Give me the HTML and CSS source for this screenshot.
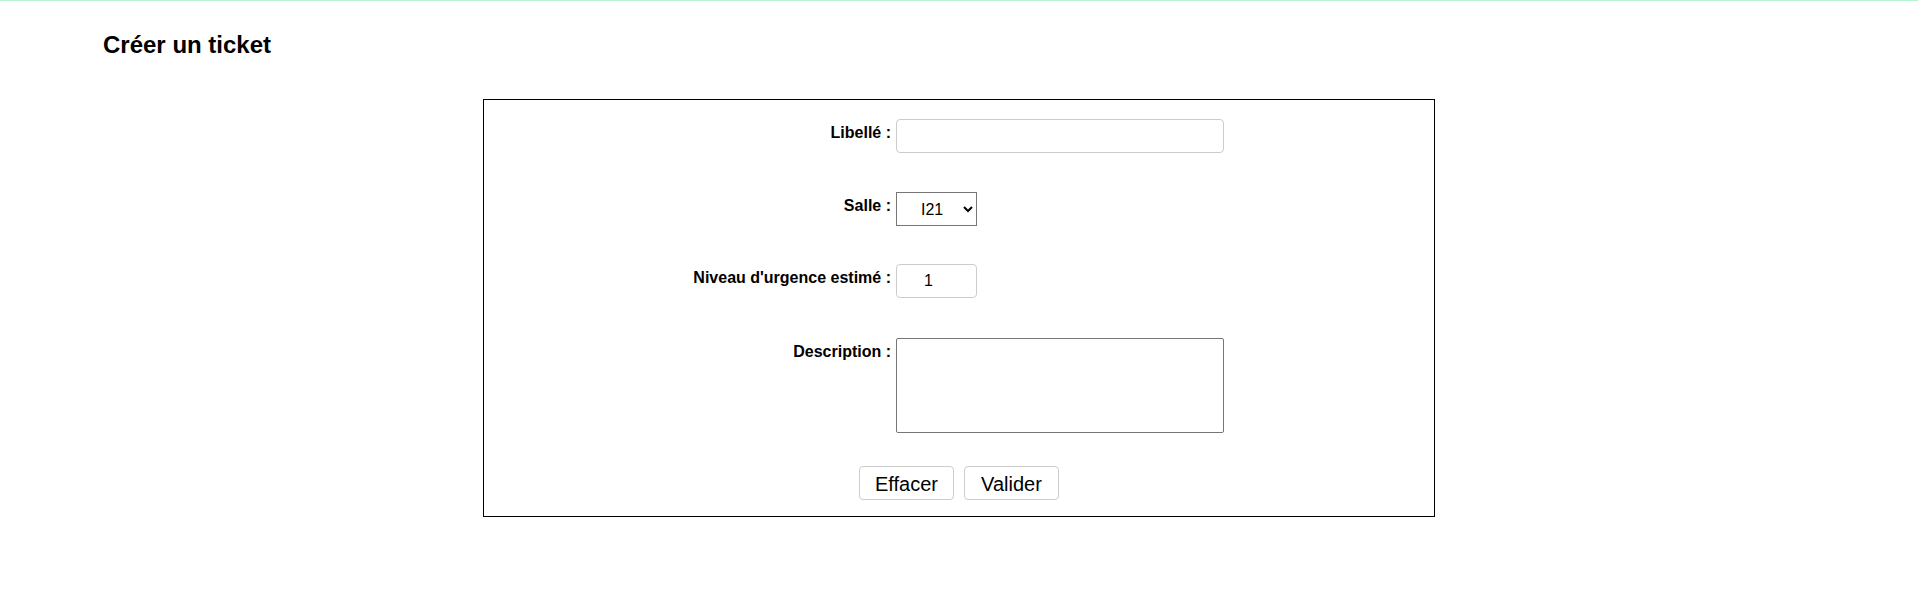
FILE: index.html
```html
<!DOCTYPE html>
<html lang="fr">
<head>
<meta charset="utf-8">
<title>Créer un ticket</title>
<link rel="stylesheet" href="styles.css">
</head>
<body>
<div class="page">
  <h2 class="title">Créer un ticket</h2>
  <form class="ticket-box">
    <div class="row row-1">
      <label class="lbl" for="libelle">Libellé :</label>
      <input class="field field-wide" id="libelle" type="text">
    </div>
    <div class="row row-2">
      <label class="lbl" for="salle">Salle :</label>
      <select class="field-select" id="salle">
        <option>I21</option>
      </select>
    </div>
    <div class="row row-3">
      <label class="lbl" for="niveau">Niveau d'urgence estimé :</label>
      <input class="field field-small" id="niveau" type="text" value="1">
    </div>
    <div class="row row-4">
      <label class="lbl" for="desc">Description :</label>
      <textarea class="field-area" id="desc"></textarea>
    </div>
    <div class="actions">
      <button type="reset" class="btn">Effacer</button>
      <button type="button" class="btn">Valider</button>
    </div>
  </form>
</div>
</body>
</html>
```

FILE: styles.css
```css
html, body {
  margin: 0;
  padding: 0;
  background: #ffffff;
}

body {
  border-top: 1px solid #b6f5cf;
  font-family: "Liberation Sans", Arial, sans-serif;
  color: #000;
}

.page {
  padding-top: 30px;
}

.title {
  margin: 0 0 40px 103px;
  font-size: 24px;
  font-weight: bold;
  line-height: 28px;
}

.ticket-box {
  box-sizing: border-box;
  width: 952px;
  margin: 0 auto;
  border: 1px solid #000;
  padding: 19px 0 16px;
  display: flex;
  flex-direction: column;
  align-items: center;
}

.row {
  width: 532px;
  display: flex;
  align-items: flex-start;
  gap: 5px;
}

.row-1 { margin-bottom: 39px; }
.row-2 { margin-bottom: 38px; }
.row-3 { margin-bottom: 40px; }
.row-4 { margin-bottom: 33px; }

.lbl {
  width: 198px;
  flex: none;
  text-align: right;
  font-weight: bold;
  font-size: 16px;
  line-height: 18px;
  padding-top: 5px;
}

.field {
  box-sizing: border-box;
  height: 34px;
  border: 1px solid #cccccc;
  border-radius: 4px;
  background: #fff;
  font-family: "Liberation Sans", Arial, sans-serif;
  color: #000;
  margin: 0;
  outline: none;
}

.field-wide {
  width: 328px;
  font-size: 16px;
  padding: 0 8px;
}

.field-small {
  width: 81px;
  font-size: 16px;
  text-align: center;
  padding: 0 16px 0 0;
}

.field-select {
  box-sizing: border-box;
  width: 81px;
  height: 34px;
  margin: 0;
  border: 1px solid #767676;
  border-radius: 0;
  background: #fff;
  font-family: "Liberation Sans", Arial, sans-serif;
  font-size: 16px;
  color: #000;
  padding: 0 0 0 20px;
}

.field-area {
  box-sizing: border-box;
  width: 328px;
  height: 95px;
  margin: 0;
  border: 1px solid #767676;
  border-radius: 2px;
  resize: none;
  font-family: "Liberation Sans", Arial, sans-serif;
  font-size: 14px;
}

.actions {
  display: flex;
  gap: 10px;
  justify-content: center;
}

.btn {
  box-sizing: border-box;
  width: 95px;
  height: 34px;
  margin: 0;
  padding: 3px 0 0;
  border: 1px solid #cccccc;
  border-radius: 4px;
  background: #fff;
  font-family: "Liberation Sans", Arial, sans-serif;
  font-size: 20px;
  color: #000;
}
```
